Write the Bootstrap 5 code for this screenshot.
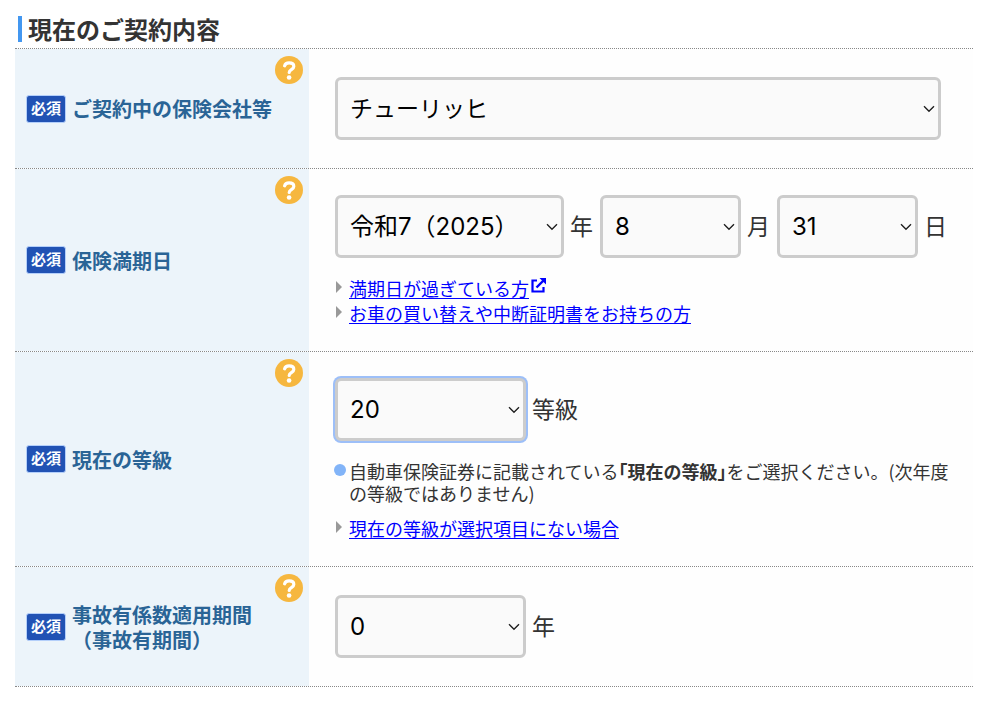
<!DOCTYPE html>
<html lang="ja">
<head>
<meta charset="utf-8">
<meta name="viewport" content="width=device-width, initial-scale=1">
<title>現在のご契約内容</title>
<link href="https://cdn.jsdelivr.net/npm/bootstrap@5.3.0/dist/css/bootstrap.min.css" rel="stylesheet">
<style>
  body { font-family: "Noto Sans CJK JP", sans-serif; color: #333; background: #fff; }
  .contract { padding: 16px 27px 0 15px; }
  .section-title { font-size: 24px; line-height: 26px; padding-left: 6px; margin: 0 0 6px 3px; border-left: 4px solid #4397f0; }
  .form-line { border-bottom: 1px dotted #888; }
  .form-lines { border-top: 1px dotted #888; }
  .label-cell { flex: 0 0 294px; gap: 6px; background: #ecf4fa; padding: 0 11px; }
  .label-text { font-size: 20px; line-height: 25px; font-weight: 700; color: #2a6496; }
  .required { width: 40px; height: 28px; font-size: 15px; line-height: 24px; padding: 0; border: 1px solid #b4cffa; background: #2152b4; border-radius: 3px; }
  .help-btn { position: absolute; top: 7px; right: 6px; width: 28px; height: 28px; padding: 0; border: 0; background: none; }
  .help-btn svg { display: block; }
  .value-cell { min-width: 0; padding: 28px 26px; background: #fefefe; }
  .value-tall { padding: 26px 16px 25px 26px; }
  .field-select {
    height: 63px; padding: 0 24px 0 12px; border: 3px solid #ccc; border-radius: 6px; color: #000;
    font-family: Inter, "Noto Sans CJK JP", sans-serif; font-size: 24px; line-height: 34px;
    background: #fafafa url("data:image/svg+xml,%3Csvg xmlns='http://www.w3.org/2000/svg' viewBox='0 0 12 8'%3E%3Cpath d='M1 1.2l5 5 5-5' fill='none' stroke='%23222' stroke-width='1.4'/%3E%3C/svg%3E") no-repeat right 3px center / 12px 8px;
  }
  .field-select:focus, .is-current { border-color: #ccc; box-shadow: 0 0 0 2px #9dbff8; }
  .w-company { width: 100%; max-width: 606px; font-size: 23px; }
  .w-year { width: 229px; }
  .w-day { width: 141px; }
  .w-grade { width: 191px; }
  .unit { font-size: 23px; line-height: 34px; padding-bottom: 3px; }
  .field-group { gap: 6px; }
  .date-groups { gap: 7px; }
  .link-list { font-size: 18px; line-height: 25px; padding-left: 14px; margin: 18px 0 0; }
  .link-list.after-note { margin-top: 12px; }
  .link-list li { position: relative; }
  .link-list li::before { content: ""; position: absolute; left: -13px; top: 5px; border: 6px solid transparent; border-left-color: #999; border-right-width: 0; }
  .link-list a { color: #00f; text-underline-offset: 2px; }
  .link-list svg { margin: 0 0 3px 2px; vertical-align: baseline; }
  .note { position: relative; font-size: 18px; line-height: 22px; padding-left: 14px; margin: 19px 0 0; }
  .note::before { content: ""; position: absolute; left: -1px; top: 4px; width: 12px; height: 12px; border-radius: 50%; background: #82b4f8; }
  .note strong { font-feature-settings: "halt"; }
</style>
</head>
<body>
<svg class="d-none" aria-hidden="true">
  <symbol id="help" viewBox="0 0 28 28">
    <circle cx="14" cy="14" r="14" fill="#f6b73f"/>
    <path d="M9.6 9.8C10.100 7.900 11.8 6.900 14.100 6.900c2.8 0 4.700 1.300 4.700 3.500 0 3.200-4.600 3.100-4.600 6" fill="none" stroke="#fff" stroke-width="3.2" stroke-linecap="round"/>
    <circle cx="14.1" cy="21.5" r="2.3" fill="#fff"/>
  </symbol>
</svg>
<main class="contract">
  <h1 class="section-title fw-bold">現在のご契約内容</h1>
  <form class="form-lines">
    <div class="form-line d-flex">
      <div class="label-cell position-relative d-flex align-items-center">
        <span class="badge required">必須</span>
        <label class="label-text" for="company">ご契約中の保険会社等</label>
        <button type="button" class="help-btn" aria-label="ヘルプ"><svg width="28" height="28"><use href="#help"/></svg></button>
      </div>
      <div class="value-cell flex-grow-1">
        <select class="form-select field-select w-company" id="company"><option>チューリッヒ</option></select>
      </div>
    </div>
    <div class="form-line d-flex">
      <div class="label-cell position-relative d-flex align-items-center">
        <span class="badge required">必須</span>
        <label class="label-text" for="year">保険満期日</label>
        <button type="button" class="help-btn" aria-label="ヘルプ"><svg width="28" height="28"><use href="#help"/></svg></button>
      </div>
      <div class="value-cell value-tall flex-grow-1">
        <div class="date-groups d-flex flex-wrap">
          <div class="field-group d-flex align-items-center">
            <select class="form-select field-select w-year" id="year"><option>令和7（2025）</option></select>
            <label class="unit" for="year">年</label>
          </div>
          <div class="field-group d-flex align-items-center">
            <select class="form-select field-select w-day" id="month"><option>8</option></select>
            <label class="unit" for="month">月</label>
          </div>
          <div class="field-group d-flex align-items-center">
            <select class="form-select field-select w-day" id="day"><option>31</option></select>
            <label class="unit" for="day">日</label>
          </div>
        </div>
        <ul class="link-list list-unstyled">
          <li><a href="#">満期日が過ぎている方</a><svg width="15" height="15" viewBox="0 0 15 15" aria-hidden="true"><path d="M6 2.500H1.500v11h11V9" fill="none" stroke="#00f" stroke-width="2.200"/><path d="M5.500 9.500l7-7" stroke="#00f" stroke-width="2.400"/><path d="M8.500 0H15v6.500z" fill="#00f"/></svg></li>
          <li><a href="#">お車の買い替えや中断証明書をお持ちの方</a></li>
        </ul>
      </div>
    </div>
    <div class="form-line d-flex">
      <div class="label-cell position-relative d-flex align-items-center">
        <span class="badge required">必須</span>
        <label class="label-text" for="grade">現在の等級</label>
        <button type="button" class="help-btn" aria-label="ヘルプ"><svg width="28" height="28"><use href="#help"/></svg></button>
      </div>
      <div class="value-cell value-tall flex-grow-1">
        <div class="field-group d-flex align-items-center">
          <select class="form-select field-select w-grade is-current" id="grade"><option>20</option></select>
          <label class="unit" for="grade">等級</label>
        </div>
        <p class="note">自動車保険証券に記載されている<strong>「現在の等級」</strong>をご選択ください。(次年度の等級ではありません)</p>
        <ul class="link-list after-note list-unstyled">
          <li><a href="#">現在の等級が選択項目にない場合</a></li>
        </ul>
      </div>
    </div>
    <div class="form-line d-flex">
      <div class="label-cell position-relative d-flex align-items-center">
        <span class="badge required">必須</span>
        <label class="label-text" for="period">事故有係数適用期間<br>（事故有期間）</label>
        <button type="button" class="help-btn" aria-label="ヘルプ"><svg width="28" height="28"><use href="#help"/></svg></button>
      </div>
      <div class="value-cell flex-grow-1">
        <div class="field-group d-flex align-items-center">
          <select class="form-select field-select w-grade" id="period"><option>0</option></select>
          <label class="unit" for="period">年</label>
        </div>
      </div>
    </div>
  </form>
</main>
<script src="https://cdn.jsdelivr.net/npm/bootstrap@5.3.0/dist/js/bootstrap.bundle.min.js"></script>
</body>
</html>
